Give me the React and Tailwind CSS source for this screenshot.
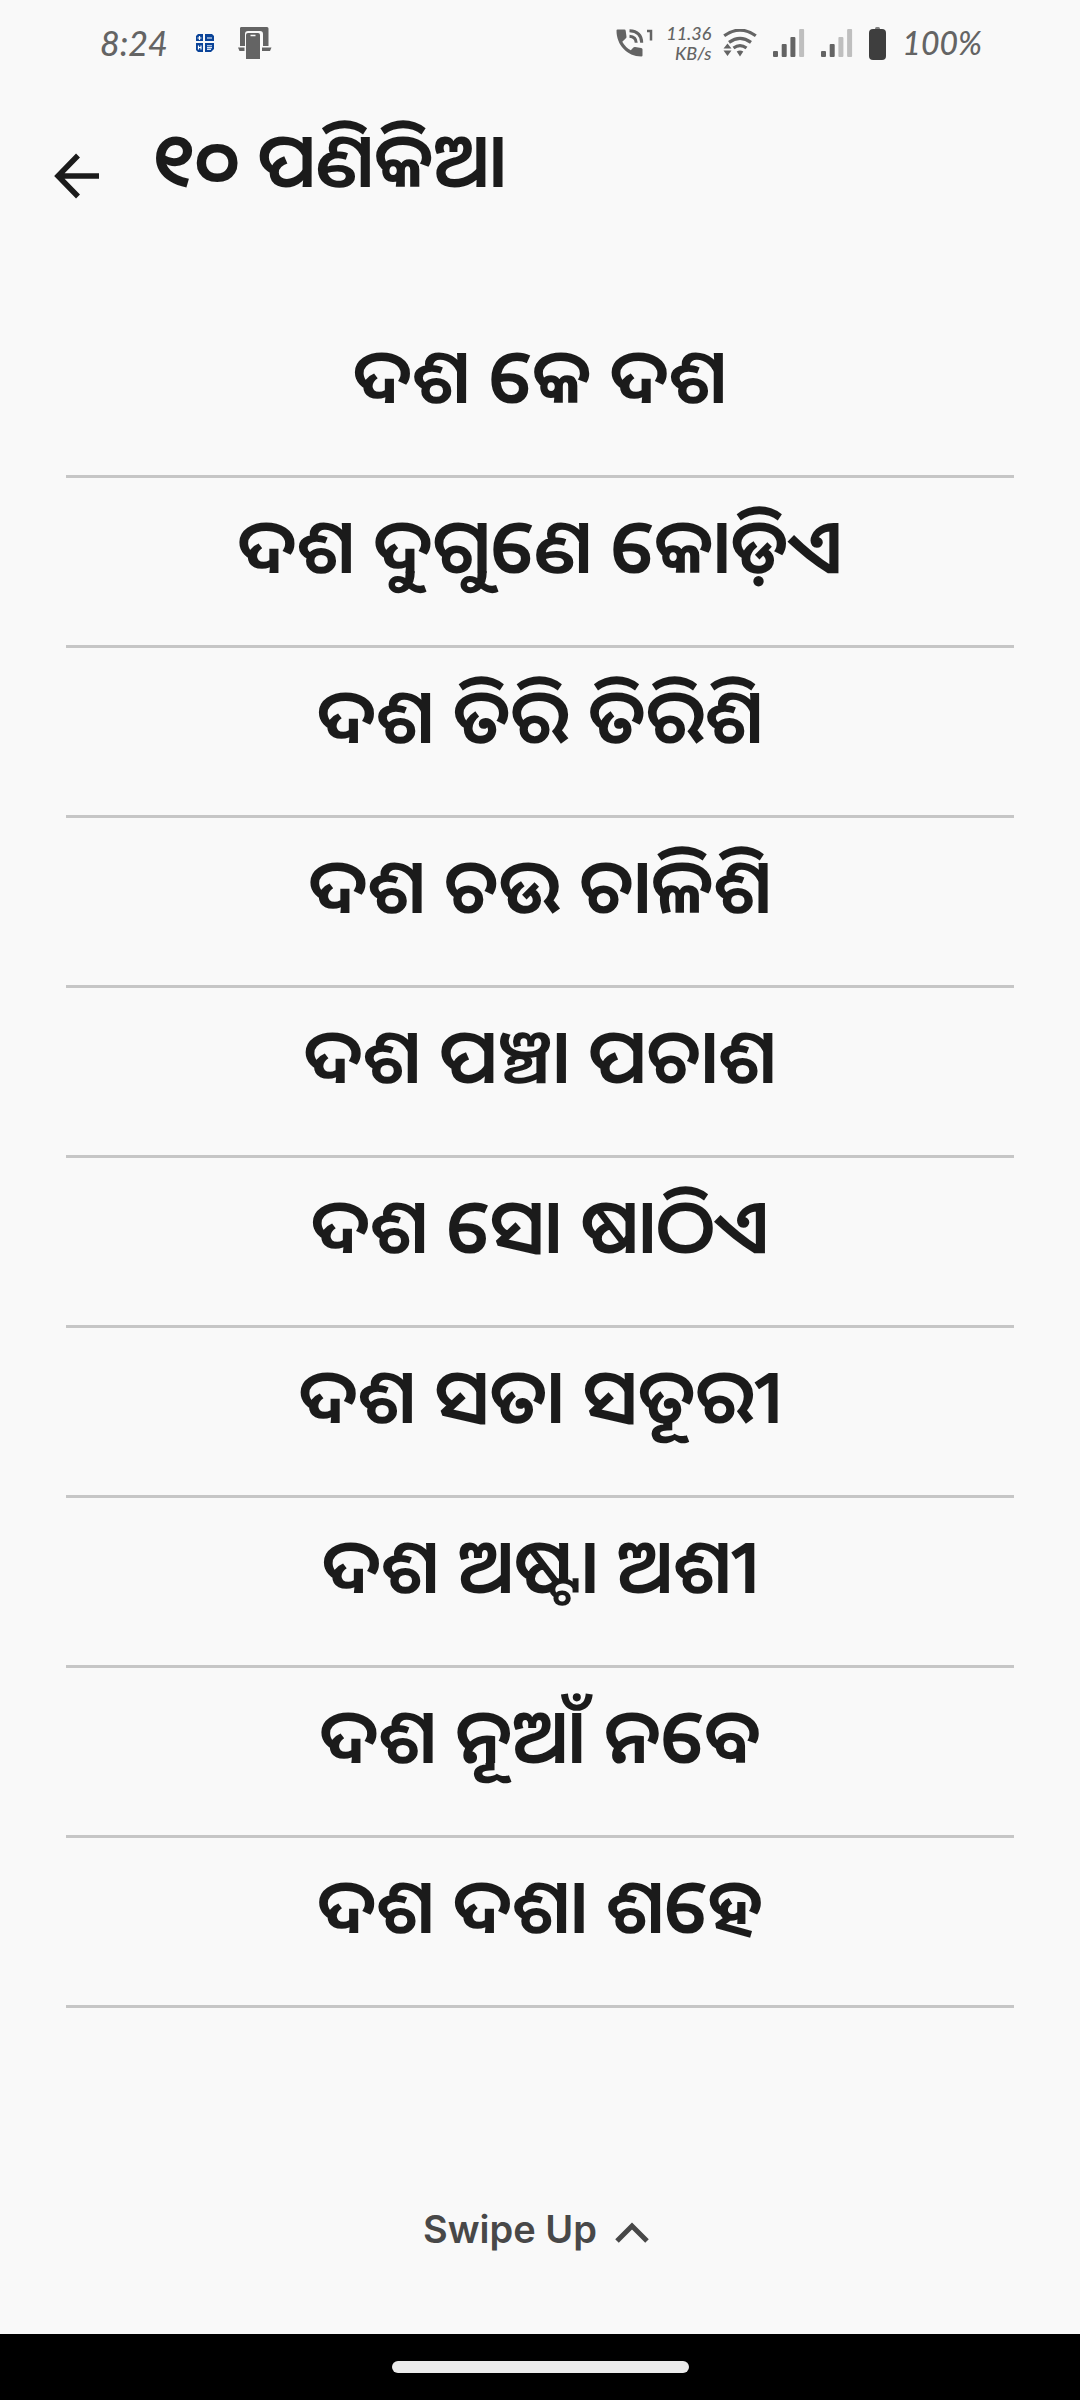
const ROWS = [
  'ଦଶ କେ ଦଶ',
  'ଦଶ ଦୁଗୁଣେ କୋଡ଼ିଏ',
  'ଦଶ ତିରି ତିରିଶି',
  'ଦଶ ଚଉ ଚାଳିଶି',
  'ଦଶ ପଞ୍ଚା ପଚାଶ',
  'ଦଶ ସୋ ଷାଠିଏ',
  'ଦଶ ସତା ସତୂରୀ',
  'ଦଶ ଅଷ୍ଟା ଅଶୀ',
  'ଦଶ ନୂଆଁ ନବେ',
  'ଦଶ ଦଶା ଶହେ',
];

function CalculatorIcon() {
  return (
    <svg width="18" height="18" viewBox="0 0 18 18" aria-hidden="true">
      <g fill="#0b4499">
        <path d="M2 0h5v7H0V2z" />
        <path d="M9 0h7l2 2v5H9z" />
        <path d="M0 9h7v9H2l-2-2z" />
        <path d="M9 9h9v6l-3 3H9z" />
      </g>
      <path d="M3.500 2v4M1.500 4h4M11 4h5" stroke="#fff" strokeWidth="1.200" />
      <path d="M2.500 11.500v4M5 11.500v4M2.500 13.500H5" stroke="#fff" strokeWidth="1.200" />
      <path d="M11 11.800h5M11 13.600h5M11 15.400h4" stroke="#dfe8f5" strokeWidth="1.100" />
    </svg>
  );
}

function PhoneStandIcon() {
  return (
    <svg width="34" height="32" viewBox="0 0 34 32" fill="#646464" aria-hidden="true">
      <path d="M3 0h26a1.500 1.500 0 0 1 1.500 1.500V19H25V7a3 3 0 0 0-3-3H10a3 3 0 0 0-3 3v12H2V1.500A1.500 1.500 0 0 1 3 0z" />
      <path d="M0 20.500h6.500V24H1.500zM24 20.500h9.500L32 24h-8z" />
      <path d="M10 6h10a2 2 0 0 1 2 2v24H8V8a2 2 0 0 1 2-2z" />
      <path d="M12.500 8.500h5" stroke="#f9f9f9" strokeWidth="1.500" />
    </svg>
  );
}

function CallIcon() {
  return (
    <svg width="38" height="28" viewBox="0 0 38 28" aria-hidden="true">
      <path
        d="M1.500 0.500h7q1 0 1.200 1.200l.8 6q0 1-.6 1.600l-3.600 3.500q3.200 5.800 8.500 8.500l2.600-2.800q.7-.7 1.700-.5l6 1q1.400.2 1.400 1.300v6.200q0 1-1.200 1C11 27.500.5 16 .5 1.600q0-1.100 1-1.100z"
        fill="#646464"
      />
      <path d="M13.500 1.800q12 .5 12.200 12M13.500 7.200q6.500.3 6.700 6.600" fill="none" stroke="#646464" strokeWidth="3" />
      <path d="M31 2h4v9.500" fill="none" stroke="#646464" strokeWidth="2.500" />
    </svg>
  );
}

function WifiIcon() {
  return (
    <svg width="34" height="28" viewBox="0 0 34 28" aria-hidden="true">
      <g fill="none" stroke="#646464" strokeWidth="3.200">
        <path d="M1.200 6.800Q17-4.500 32.800 6.800" />
        <path d="M6 13.400q11-8 22 0" />
        <path d="M10.500 19q6.500-4.800 13 0" />
      </g>
      <g fill="#646464">
        <path d="M4.500 14.500 8.500 19.500H.5zM.5 21.500h8l-4 5.500zM13.700 22.500q3.300-2 6.600 0L17 27.500z" />
      </g>
    </svg>
  );
}

function SignalIcon({ bars }) {
  return (
    <svg width="32" height="28" viewBox="0 0 32 28" aria-hidden="true">
      {[6, 13, 20, 28].map((h, i) => (
        <rect key={h} x={i * 8.700} y={28 - h} width="5" height={h} rx="1" fill={i < bars ? '#646464' : '#bfbfbf'} />
      ))}
    </svg>
  );
}

function BatteryIcon() {
  return (
    <svg width="17" height="33" viewBox="0 0 17 33" aria-hidden="true">
      <path d="M6 2.500V1.500Q6 0 7.500 0h2Q11 0 11 1.500v1z" fill="#808080" />
      <rect y="2" width="17" height="31" rx="4" fill="#3e3e3e" />
    </svg>
  );
}

function StatusBar() {
  return (
    <div className="flex h-[86px] items-center justify-between pr-[98px] pl-[100px] text-[#646464]">
      <div className="flex items-center gap-6">
        <span className="w-[72px] font-['Lato'] text-[34px] leading-9 font-medium italic">8:24</span>
        <CalculatorIcon />
        <PhoneStandIcon />
      </div>
      <div className="flex items-center">
        <CallIcon />
        <span className="mr-3 ml-3 flex flex-col text-right font-['Lato'] text-lg leading-5 font-medium italic">
          <span>11.36</span>
          <span>KB/s</span>
        </span>
        <WifiIcon />
        <span className="ml-4"><SignalIcon bars={3} /></span>
        <span className="ml-4"><SignalIcon bars={2} /></span>
        <span className="mr-4 ml-4"><BatteryIcon /></span>
        <span className="font-['Lato'] text-[32px] leading-9 font-medium italic">100%</span>
      </div>
    </div>
  );
}

export default function App() {
  return (
    <div className="flex min-h-screen flex-col bg-[#f9f9f9] font-['Noto_Sans_Oriya','Noto_Sans','Inter',sans-serif] text-[#1b1b1b]">
      <StatusBar />
      <header className="flex h-[222px] items-start pl-[54px]">
        <button type="button" aria-label="Back" className="mt-[67px]">
          <svg width="46" height="46" viewBox="0 0 46 46" fill="none" stroke="#1b1b1b" strokeWidth="5.500" aria-hidden="true">
            <path d="M45 23H5M24 2.500 4 23l20 20.500" />
          </svg>
        </button>
        <h1 className="mt-5 ml-[52px] text-[76px] leading-[104px] font-semibold">୧୦ ପଣିକିଆ</h1>
      </header>
      <main className="px-[66px]">
        <ul>
          {ROWS.map((row) => (
            <li
              key={row}
              className="flex h-[170px] items-start justify-center border-b-[3px] border-[#c6c6c6] pt-[14px] text-[76px] leading-[104px] font-semibold whitespace-nowrap"
            >
              {row}
            </li>
          ))}
        </ul>
      </main>
      <div className="flex flex-1 items-center justify-center pt-[116px]">
        <button type="button" className="flex items-center gap-3 font-['Inter'] text-[38px] leading-10 font-semibold text-[#484848]">
          Swipe Up
          <svg width="48" height="48" viewBox="0 0 48 48" fill="none" stroke="#484848" strokeWidth="5" aria-hidden="true">
            <path d="M8 36 23 21l15 15" />
          </svg>
        </button>
      </div>
      <footer className="flex h-[66px] items-center justify-center bg-black">
        <div className="h-3 w-[27.500%] rounded-full bg-[#ebebeb]" />
      </footer>
    </div>
  );
}
